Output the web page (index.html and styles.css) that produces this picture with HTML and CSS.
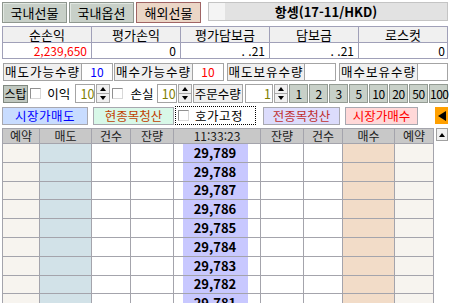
FILE: index.html
```html
<!DOCTYPE html>
<html lang="ko">
<head>
    <meta charset="UTF-8">
    <title>해외선물 호가주문</title>
    <link rel="stylesheet" href="styles.css">
</head>
<body>
<div class="app">
    <div class="top-bar">
        <div class="tab">국내선물</div>
        <div class="tab">국내옵션</div>
        <div class="tab active">해외선물</div>
        <div class="title-box">
            <div class="title-pad"></div>
            <div class="title">항셍(17-11/HKD)</div>
        </div>
    </div>

    <table class="summary">
        <tr><th>순손익</th><th>평가손익</th><th>평가담보금</th><th>담보금</th><th>로스컷</th></tr>
        <tr><td class="red">2,239,650</td><td>0</td><td>. .21</td><td>. .21</td><td class="last">0</td></tr>
    </table>

    <div class="qty-row">
        <div class="label">매도가능수량</div><div class="value blue">10</div>
        <div class="label gap1">매수가능수량</div><div class="value red">10</div>
        <div class="label gap3 narrow">매도보유수량</div><div class="value"></div>
        <div class="label gap3">매수보유수량</div><div class="value"></div>
    </div>

    <div class="ctrl-row">
        <div class="stop">스탑</div>
        <div class="check ml2"></div>
        <div class="ctrl-text ml6">이익</div>
        <div class="spin ml4"><div class="spin-val">10</div><div class="spin-btns"><span class="up"></span><span class="down"></span></div></div>
        <div class="check ml2"></div>
        <div class="ctrl-text ml7">손실</div>
        <div class="spin ml2"><div class="spin-val">10</div><div class="spin-btns"><span class="up"></span><span class="down"></span></div></div>
        <div class="order-label">주문수량</div>
        <div class="spin ml2"><div class="spin-val wide">1</div><div class="spin-btns"><span class="up"></span><span class="down"></span></div></div>
        <div class="num-btns">
            <div class="num">1</div><div class="num">2</div><div class="num">3</div><div class="num">5</div>
            <div class="num">10</div><div class="num">20</div><div class="num">50</div><div class="num">100</div>
        </div>
    </div>

    <div class="btn-row">
        <div class="act market-sell">시장가매도</div>
        <div class="act clear-one">현종목청산</div>
        <div class="act fix-hoga"><div class="check"></div><span>호가고정</span></div>
        <div class="act clear-all">전종목청산</div>
        <div class="act market-buy">시장가매수</div>
        <div class="act collapse"><span class="tri-left"></span></div>
    </div>

    <div class="book">
        <table class="hoga">
            <colgroup>
                <col style="width:37px"><col style="width:52px"><col style="width:39px"><col style="width:43px">
                <col style="width:9px"><col style="width:65px"><col style="width:13px">
                <col style="width:43px"><col style="width:39px"><col style="width:52px"><col style="width:39px">
            </colgroup>
            <thead>
                <tr><th>예약</th><th>매도</th><th>건수</th><th>잔량</th><th colspan="3">11:33:23</th><th>잔량</th><th>건수</th><th>매수</th><th>예약</th></tr>
            </thead>
            <tbody>
                <tr><td class="resv"></td><td class="sell"></td><td></td><td></td><td class="gap-l"></td><td class="price">29,789</td><td class="gap-r"></td><td></td><td></td><td class="buy"></td><td class="resv"></td></tr>
                <tr><td class="resv"></td><td class="sell"></td><td></td><td></td><td class="gap-l"></td><td class="price">29,788</td><td class="gap-r"></td><td></td><td></td><td class="buy"></td><td class="resv"></td></tr>
                <tr><td class="resv"></td><td class="sell"></td><td></td><td></td><td class="gap-l"></td><td class="price">29,787</td><td class="gap-r"></td><td></td><td></td><td class="buy"></td><td class="resv"></td></tr>
                <tr><td class="resv"></td><td class="sell"></td><td></td><td></td><td class="gap-l"></td><td class="price">29,786</td><td class="gap-r"></td><td></td><td></td><td class="buy"></td><td class="resv"></td></tr>
                <tr><td class="resv"></td><td class="sell"></td><td></td><td></td><td class="gap-l"></td><td class="price">29,785</td><td class="gap-r"></td><td></td><td></td><td class="buy"></td><td class="resv"></td></tr>
                <tr><td class="resv"></td><td class="sell"></td><td></td><td></td><td class="gap-l"></td><td class="price">29,784</td><td class="gap-r"></td><td></td><td></td><td class="buy"></td><td class="resv"></td></tr>
                <tr><td class="resv"></td><td class="sell"></td><td></td><td></td><td class="gap-l"></td><td class="price">29,783</td><td class="gap-r"></td><td></td><td></td><td class="buy"></td><td class="resv"></td></tr>
                <tr><td class="resv"></td><td class="sell"></td><td></td><td></td><td class="gap-l"></td><td class="price">29,782</td><td class="gap-r"></td><td></td><td></td><td class="buy"></td><td class="resv"></td></tr>
                <tr><td class="resv"></td><td class="sell"></td><td></td><td></td><td class="gap-l"></td><td class="price">29,781</td><td class="gap-r"></td><td></td><td></td><td class="buy"></td><td class="resv"></td></tr>
            </tbody>
        </table>
        <div class="scroll"><div class="scroll-up"><span class="tri-up"></span></div></div>
    </div>
</div>
</body>
</html>
```

FILE: styles.css
```css
* {
    margin: 0;
    padding: 0;
    box-sizing: border-box;
}

body {
    font-family: "Noto Sans CJK KR", "Noto Sans", sans-serif;
    font-size: 12px;
    color: #000;
    background: #fff;
    width: 450px;
    height: 303px;
    overflow: hidden;
}

.app {
    padding: 2px 2px 0 2px;
    display: flex;
    flex-direction: column;
}

/* top tabs + title */
.top-bar {
    display: flex;
    height: 21px;
}

.tab {
    width: 65px;
    margin-right: 2px;
    display: flex;
    align-items: center;
    justify-content: center;
    font-size: 13px;
    background: #c8d0c8;
    border: 1px solid #8f978f;
    box-shadow: inset 1px 1px #e2e8e2;
}

.tab.active {
    background: #ebd6c6;
    border-color: #a06464;
    box-shadow: none;
}

.title-box {
    flex: 1;
    margin-left: 5px;
    height: 19px;
    display: flex;
    border: 1px solid #c4c4c4;
}

.title-pad {
    width: 16px;
    background: #f4f4f4;
}

.title {
    flex: 1;
    background: #e2e2e2;
    font-weight: bold;
    font-size: 13px;
    text-align: center;
    line-height: 17px;
    padding-right: 20px;
}

/* summary table */
.summary {
    margin-top: 3px;
    width: 446px;
    border-collapse: collapse;
    table-layout: fixed;
}

.summary th,
.summary td {
    border: 1px solid #a0a0b8;
    height: 16px;
    font-weight: normal;
    line-height: 14px;
}

.summary th {
    background: #f0f0f0;
    font-size: 13px;
}

.summary td {
    text-align: right;
    padding-right: 4px;
}

.summary td.last {
    padding-right: 2px;
}

.red {
    color: #ff0000;
}

.blue {
    color: #0000ff;
}

/* qty row */
.qty-row {
    margin-top: 4px;
    display: flex;
    height: 18px;
}

.label {
    width: 79px;
    margin-left: 1px;
    background: #f0f0f0;
    border: 1px solid #a4a4a4;
    text-align: center;
    letter-spacing: 1px;
    font-size: 12.5px;
    line-height: 16px;
}

.label.gap1 {
    margin-left: 1px;
}

.label.gap3 {
    margin-left: 3px;
}

.label.narrow {
    width: 78px;
}

.value {
    width: 31px;
    background: #fff;
    border: 1px solid #a4a4a4;
    border-left: none;
    text-align: center;
    line-height: 16px;
}

.qty-row .value:last-child {
    flex: 1;
}

/* control row */
.ctrl-row {
    margin-top: 3px;
    display: flex;
    align-items: center;
    height: 19px;
}

.stop {
    width: 26px;
    height: 18px;
    margin-left: 1px;
    background: #c0c8c0;
    border: 1px solid #808880;
    text-align: center;
    line-height: 16px;
}

.check {
    width: 11px;
    height: 11px;
    background: #fff;
    border: 1px solid #909090;
    border-right-color: #d8d8d8;
    border-bottom-color: #d8d8d8;
    flex-shrink: 0;
}

.ml2 { margin-left: 2px; }
.ml4 { margin-left: 4px; }
.ml6 { margin-left: 6px; }
.ml7 { margin-left: 7px; }

.ctrl-text {
    width: 25px;
    font-size: 12.5px;
}

.spin {
    display: flex;
    height: 19px;
}

.spin-val {
    width: 20px;
    border: 1px solid #a4a4a4;
    color: #808000;
    text-align: right;
    line-height: 17px;
    font-size: 12.5px;
}

.spin-val.wide {
    width: 28px;
    padding-right: 1px;
}

.spin-btns {
    width: 14px;
    display: flex;
    flex-direction: column;
    margin-left: 1px;
}

.spin-btns span {
    flex: 1;
    background: #f0f0f0;
    border: 1px solid #a8a8a8;
    display: flex;
    align-items: center;
    justify-content: center;
}

.spin-btns span + span {
    border-top: none;
}

.spin-btns .up::before {
    content: "";
    border-left: 3px solid transparent;
    border-right: 3px solid transparent;
    border-bottom: 4px solid #000;
}

.spin-btns .down::before {
    content: "";
    border-left: 3px solid transparent;
    border-right: 3px solid transparent;
    border-top: 4px solid #000;
}

.order-label {
    width: 52px;
    height: 19px;
    margin-left: 1px;
    background: #f0f0f0;
    border: 1px solid #a4a4a4;
    text-align: center;
    line-height: 17px;
    font-size: 12.5px;
}

.num-btns {
    display: flex;
    gap: 1px;
    margin-left: 1px;
}

.num {
    width: 19px;
    height: 19px;
    background: #c8d0c8;
    border: 1px solid #949c94;
    text-align: center;
    line-height: 17px;
    letter-spacing: -0.5px;
}

/* action buttons */
.btn-row {
    margin-top: 3px;
    display: flex;
    align-items: center;
    height: 19px;
}

.act {
    height: 18px;
    border: 1px solid #a8a8b0;
    display: flex;
    align-items: center;
    justify-content: center;
    font-size: 12.5px;
}

.market-sell {
    width: 86px;
    background: #c8dcff;
    color: #0000ff;
    letter-spacing: 0.5px;
}

.clear-one {
    width: 81px;
    margin-left: 5px;
    background: #d8f8e8;
    color: #c04000;
}

.fix-hoga {
    width: 81px;
    height: 19px;
    margin-left: 1px;
    border: 1px dotted #000;
    justify-content: flex-start;
    padding-left: 2px;
}

.fix-hoga span {
    margin-left: 6px;
    letter-spacing: 0.5px;
}

.clear-all {
    width: 77px;
    margin-left: 7px;
    background: #dcdcfc;
    color: #c03030;
}

.market-buy {
    width: 73px;
    margin-left: 5px;
    background: #ffd8d8;
    color: #ff0000;
}

.collapse {
    width: 13px;
    height: 17px;
    margin-left: 17px;
    background: #ffa000;
    border: none;
}

.tri-left {
    border-top: 5px solid transparent;
    border-bottom: 5px solid transparent;
    border-right: 8px solid #000;
}

/* order book */
.book {
    margin-top: 3px;
    display: flex;
    height: 177px;
    overflow: hidden;
}

.hoga {
    width: 431px;
    border-collapse: collapse;
    table-layout: fixed;
}

.hoga th,
.hoga td {
    border: 1px solid #a4a4ac;
    padding: 0;
}

.hoga th {
    height: 15px;
    background: #c8c8c8;
    font-weight: normal;
    color: #202020;
    line-height: 14px;
}

.hoga td {
    height: 18.8px;
    background: #fff;
}

.hoga td.resv {
    background: #f7f4ef;
}

.hoga td.sell {
    background: #d2e2e8;
}

.hoga td.buy {
    background: #f2dcc8;
}

.hoga td.gap-l {
    border-right: none;
}

.hoga td.gap-r {
    border-left: none;
}

.hoga td.price {
    border-left: none;
    border-right: none;
    background: #c8c8ff;
    text-align: center;
    font-weight: bold;
    font-size: 13px;
    line-height: 14px;
}

.scroll {
    width: 15px;
    padding: 0 1px 0 2px;
}

.scroll-up {
    width: 12px;
    height: 13px;
    background: #f0f0f0;
    border: 1px solid #a0a0a0;
    display: flex;
    align-items: center;
    justify-content: center;
}

.tri-up {
    border-left: 3px solid transparent;
    border-right: 3px solid transparent;
    border-bottom: 4px solid #000;
}
```
